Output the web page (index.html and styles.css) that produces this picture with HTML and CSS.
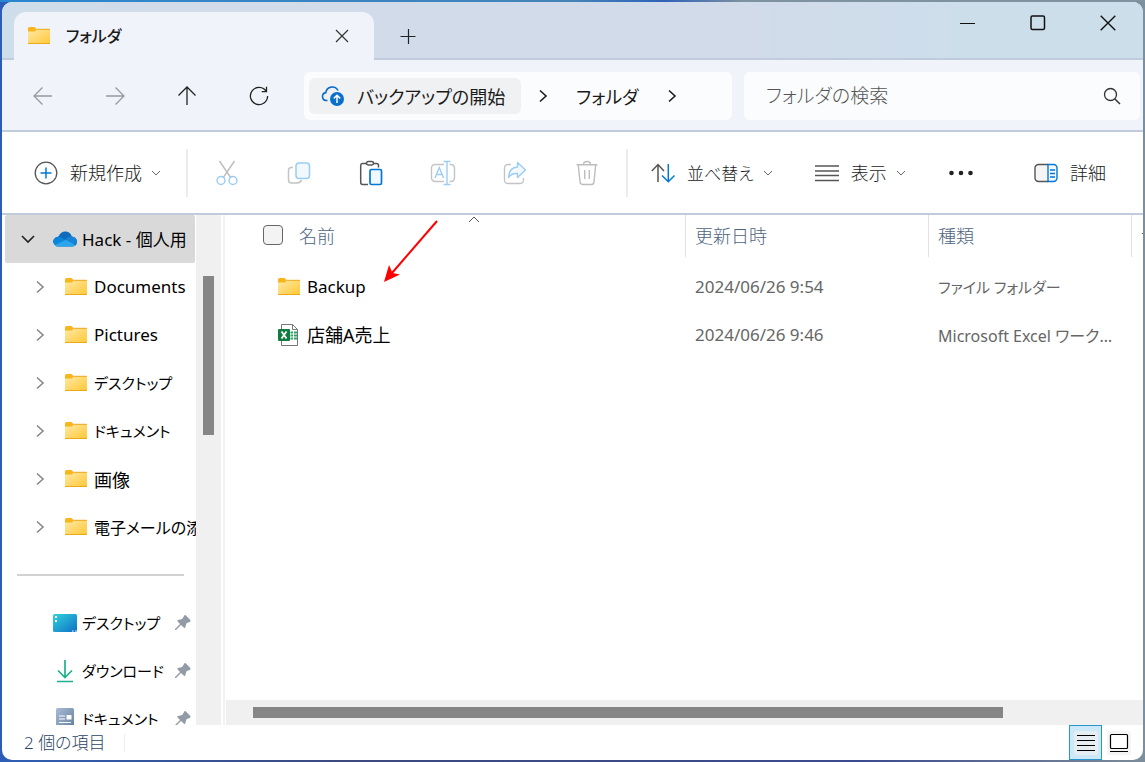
FILE: index.html
```html
<!DOCTYPE html>
<html lang="ja">
<head>
<meta charset="utf-8">
<title>フォルダ</title>
<link rel="stylesheet" href="styles.css">
</head>
<body>
<svg class="sprite" aria-hidden="true">
  <defs>
    <linearGradient id="g-folder" x1="0" y1="0" x2="1" y2="1"><stop offset="0" stop-color="#ffe9a8"/><stop offset="1" stop-color="#ffc937"/></linearGradient>
    <linearGradient id="g-desk" x1="0" y1="0" x2="1" y2="1"><stop offset="0" stop-color="#2fd3dd"/><stop offset="1" stop-color="#1070c4"/></linearGradient>
    <linearGradient id="g-doc" x1="0" y1="0" x2="1" y2="1"><stop offset="0" stop-color="#a9bcd3"/><stop offset="1" stop-color="#5f7d9f"/></linearGradient>
  </defs>
  <symbol id="folder" viewBox="0 0 24 20">
    <path d="M1 2.5Q1 1 2.5 1H7.5L9.5 3V6H1Z" fill="#f9b51c"/>
    <path d="M1 5.5H8L10.5 3H22.5Q23 3 23 3.5V17.5H1Z" fill="url(#g-folder)"/>
    <path d="M9.5 3.3H23M1 17.5H23" stroke="#eda91d" fill="none"/>
  </symbol>
  <symbol id="down" viewBox="0 0 10 10"><path d="M1 3L5 7L9 3" fill="none" stroke="#666"/></symbol>
  <symbol id="right" viewBox="0 0 10 14"><path d="M2 1.5L8 7L2 12.5" fill="none" stroke="currentColor" stroke-width="1.6"/></symbol>
  <symbol id="pin" viewBox="0 0 18 18">
    <path d="M10.5 1.3Q11.3 .8 12 1.5L16.3 6Q17 7 16 7.8L12.5 9.3L11.2 13.4Q10.7 14.5 9.7 13.6L7 11L2 16H1V15L6 10L3.6 7.5Q2.800 6.500 4 6L8.200 5Z" fill="#929ca6"/>
  </symbol>
</svg>

<div class="window">
  <header class="titlebar">
    <div class="tab">
      <svg class="icon24" viewBox="0 0 24 20"><use href="#folder"/></svg>
      <span class="tab-title">フォルダ</span>
      <button class="tab-close" aria-label="タブを閉じる"><svg width="14" height="14" viewBox="0 0 14 14"><path d="M1 1L13 13M13 1L1 13" fill="none" stroke="#333" stroke-width="1.200"/></svg></button>
    </div>
    <button class="tab-new" aria-label="新しいタブ"><svg width="16" height="16" viewBox="0 0 16 16"><path d="M.5 8.500H15.500M8.500 1V16" fill="none" stroke="#222" stroke-width="1.200"/></svg></button>
    <div class="caption">
      <button aria-label="最小化"><svg width="16" height="16" viewBox="0 0 16 16"><path d="M0 8.500H15" stroke="#111"/></svg></button>
      <button aria-label="最大化"><svg width="16" height="16" viewBox="0 0 16 16"><rect x="1" y="1" width="13.500" height="13.500" rx="1.500" fill="none" stroke="#111" stroke-width="1.500"/></svg></button>
      <button aria-label="閉じる"><svg width="16" height="16" viewBox="0 0 16 16"><path d="M.7 .7L15.300 15.300M15.300 .7L.7 15.300" fill="none" stroke="#111" stroke-width="1.400"/></svg></button>
    </div>
  </header>

  <nav class="navbar">
    <div class="nav-buttons">
      <button class="off" aria-label="戻る"><svg width="20" height="20" viewBox="0 0 20 20"><path d="M19 10H1.500M9.500 1.500L1 10L9.500 18.500"/></svg></button>
      <button class="off" aria-label="進む"><svg width="20" height="20" viewBox="0 0 20 20"><path d="M1 10H18.500M10.500 1.500L19 10L10.500 18.500"/></svg></button>
      <button aria-label="上へ"><svg width="20" height="20" viewBox="0 0 20 20"><path d="M10 19V1.500M1.500 9.500L10 1L18.500 9.500"/></svg></button>
      <button aria-label="更新"><svg width="20" height="20" viewBox="0 0 20 20"><path d="M17.300 5.500A8.600 8.600 0 1 0 18.600 10M17.500 .8V5.600H12.700"/></svg></button>
    </div>
    <div class="address">
      <button class="crumb crumb-backup">
        <svg width="24" height="22" viewBox="0 0 24 22"><path d="M6.500 15.500H5A4 4 0 0 1 4.800 7.600A6.500 6.500 0 0 1 17 5.500" fill="none" stroke="#0a6ecb" stroke-width="1.600"/><circle cx="16" cy="14" r="7" fill="#0a6ecb"/><path d="M16 18V10.500M12.800 13.400L16 10.200L19.200 13.400" fill="none" stroke="#fff" stroke-width="1.500"/></svg>
        バックアップの開始
      </button>
      <button class="crumb-next" aria-label="展開"><svg width="10" height="14"><use href="#right"/></svg></button>
      <button class="crumb">フォルダ</button>
      <button class="crumb-next" aria-label="展開"><svg width="10" height="14"><use href="#right"/></svg></button>
    </div>
    <label class="search">
      <input type="text" placeholder="フォルダの検索" aria-label="フォルダの検索">
      <svg width="18" height="18" viewBox="0 0 18 18"><circle cx="7.500" cy="7.500" r="6" fill="none" stroke="#333" stroke-width="1.300"/><path d="M12 12L17 17" stroke="#333" stroke-width="1.500"/></svg>
    </label>
  </nav>

  <div class="toolbar">
    <button class="tool tool-new">
      <svg width="24" height="24" viewBox="0 0 24 24" fill="none"><circle cx="12" cy="12" r="10.800" stroke="#555" stroke-width="1.300"/><path d="M6.500 12H17.500M12 6.500V17.500" stroke="#0078d4" stroke-width="1.500"/></svg>
      <span>新規作成</span><svg class="chev" width="10" height="10"><use href="#down"/></svg>
    </button>
    <div class="tool-icons">
      <button aria-label="切り取り" disabled><svg width="24" height="26" viewBox="0 0 24 26" fill="none" stroke-width="1.400"><path d="M4.500 1L16 18M19.500 1L8 18" stroke="#bdbdbd"/><circle cx="6" cy="20.500" r="4" stroke="#9bcdf2"/><circle cx="18" cy="20.500" r="4" stroke="#9bcdf2"/></svg></button>
      <button aria-label="コピー" disabled><svg width="24" height="26" viewBox="0 0 24 26" fill="none" stroke-width="1.500"><path d="M6 7.500H4.500A3 3 0 0 0 1.500 10.500V20A3 3 0 0 0 4.500 23H10Q13.500 23 14.500 20" stroke="#c4c4c4"/><rect x="9" y="3" width="13.500" height="15.500" rx="3" fill="#f1f8fe" stroke="#9bcdf2"/></svg></button>
      <button aria-label="貼り付け"><svg width="24" height="26" viewBox="0 0 24 26" fill="none" stroke-width="1.500"><path d="M8 3.500H3.500A2 2 0 0 0 1.700 5.500V22.500A2 2 0 0 0 3.700 24.500H9M14 3.500H17.500A2 2 0 0 1 19.500 5.500V7.500" stroke="#555"/><rect x="7.500" y="1.500" width="7" height="3.500" rx="1.700" stroke="#555"/><rect x="11" y="9.500" width="11.500" height="15" rx="1.500" fill="#f1f8fe" stroke="#0078d4" stroke-width="1.700"/></svg></button>
      <button aria-label="名前の変更" disabled><svg width="26" height="26" viewBox="0 0 26 26" fill="none" stroke-width="1.400"><path d="M14 4.500H5A3.500 3.500 0 0 0 1.500 8V18A3.500 3.500 0 0 0 5 21.500H14M19.500 4.500H21A3.500 3.500 0 0 1 24.500 8V18A3.500 3.500 0 0 1 21 21.500H19.500" stroke="#c4c4c4"/><path d="M5 18L9.300 7.500L13.600 18M6.500 14.500H12M13.500 1.500H20.500M13.500 24.500H20.500M17 1.500V24.500" stroke="#9bcdf2"/></svg></button>
      <button aria-label="共有" disabled><svg width="24" height="26" viewBox="0 0 24 26" fill="none" stroke-width="1.400"><path d="M8 4.500H5A3.500 3.500 0 0 0 1.500 8V20A3.500 3.500 0 0 0 5 23.500H17A3.500 3.500 0 0 0 20.500 20V18" stroke="#c4c4c4"/><path d="M14.500 2.500L22.500 10L14.500 17.500V13.500Q8.500 13 5.500 17.500Q6 7.500 14.500 7Z" fill="#f1f8fe" stroke="#9bcdf2" stroke-linejoin="round"/></svg></button>
      <button aria-label="削除" disabled><svg width="24" height="26" viewBox="0 0 24 26" fill="none" stroke="#bdbdbd" stroke-width="1.400"><path d="M1.500 4.700H22.500M8.500 4.500Q8.500 1.500 12 1.500T15.500 4.500M3.300 5L5 21.800Q5.300 24.500 7.500 24.500H16.500Q18.700 24.500 19 21.800L20.700 5M9.700 10V19M14.300 10V19"/></svg></button>
    </div>
    <button class="tool tool-sort">
      <svg width="24" height="20" viewBox="0 0 24 20" fill="none" stroke-width="1.500"><path d="M7 19V2M.8 8L7 1.500L13 8" stroke="#555"/><path d="M17.300 1V18.500M11 12.500L17.300 18.700L23.500 12.500" stroke="#0078d4"/></svg>
      <span>並べ替え</span><svg class="chev" width="10" height="10"><use href="#down"/></svg>
    </button>
    <button class="tool tool-view">
      <svg width="24" height="18" viewBox="0 0 24 18"><path d="M0 2H24M0 7H24M0 11.500H24M0 16.500H24" stroke="#555" stroke-width="1.300"/></svg>
      <span>表示</span><svg class="chev" width="10" height="10"><use href="#down"/></svg>
    </button>
    <button class="tool tool-more" aria-label="その他"><svg width="24" height="6" viewBox="0 0 24 6" fill="#222"><circle cx="2.500" cy="3" r="2.300"/><circle cx="12" cy="3" r="2.300"/><circle cx="21.500" cy="3" r="2.300"/></svg></button>
    <button class="tool tool-details">
      <svg width="24" height="20" viewBox="0 0 24 20" fill="none" stroke-width="1.400"><path d="M14 1.500H4.500A3.500 3.500 0 0 0 1 5V15A3.500 3.500 0 0 0 4.500 18.500H14" fill="#f5f5f5" stroke="#555"/><path d="M14 1.500H19.500A3.500 3.500 0 0 1 23 5V15A3.500 3.500 0 0 1 19.500 18.500H14Z" fill="#f1f8fe" stroke="#0078d4"/><path d="M16 7H21M16 10.500H21M16 14H21" stroke="#0078d4"/></svg>
      <span>詳細</span>
    </button>
  </div>

  <div class="body">
    <aside class="sidebar">
      <ul class="tree">
        <li class="root"><svg class="tw" width="14" height="14" viewBox="0 0 14 14"><path d="M1 4L7 10L13 4" fill="none" stroke="#222" stroke-width="1.600"/></svg>
          <svg width="24" height="16" viewBox="0 0 24 16"><path d="M2 14Q-1 11 1 8Q2.500 5.500 5.500 5.500Q8 0 13 .5Q17.500 1 18.800 5.500Q23.500 6 24 10.500Q24 15 19.500 15.500H5Q3 15.500 2 14Z" fill="#0f6cbd"/><path d="M1 8.500Q3 5 6.500 5.800L14 10L2 14Q-1 11 1 8.500Z" fill="#0a86dc"/><path d="M12 9Q14.500 5.500 18.800 5.600Q24 6.500 24 11L21 14Z" fill="#1683d8"/><path d="M2 14L12.500 9Q14 9 15 10L22.500 14.200Q21.500 15.500 19.500 15.500H5Q3 15.500 2 14Z" fill="#2ca5ec"/></svg>
          <a href="#">Hack - 個人用</a></li>
        <li><svg class="tw" width="10" height="14"><use href="#right"/></svg><svg class="icon24" viewBox="0 0 24 20"><use href="#folder"/></svg><a href="#">Documents</a></li>
        <li><svg class="tw" width="10" height="14"><use href="#right"/></svg><svg class="icon24" viewBox="0 0 24 20"><use href="#folder"/></svg><a href="#">Pictures</a></li>
        <li><svg class="tw" width="10" height="14"><use href="#right"/></svg><svg class="icon24" viewBox="0 0 24 20"><use href="#folder"/></svg><a class="kana" href="#">デスクトップ</a></li>
        <li><svg class="tw" width="10" height="14"><use href="#right"/></svg><svg class="icon24" viewBox="0 0 24 20"><use href="#folder"/></svg><a class="kana" href="#">ドキュメント</a></li>
        <li><svg class="tw" width="10" height="14"><use href="#right"/></svg><svg class="icon24" viewBox="0 0 24 20"><use href="#folder"/></svg><a class="kanji" href="#">画像</a></li>
        <li><svg class="tw" width="10" height="14"><use href="#right"/></svg><svg class="icon24" viewBox="0 0 24 20"><use href="#folder"/></svg><a class="mixed" href="#">電子メールの添付</a></li>
      </ul>
      <hr>
      <ul class="quick">
        <li><svg width="24" height="18" viewBox="0 0 24 18"><rect width="24" height="18" rx="1.500" fill="url(#g-desk)"/><path d="M2 3H4M2 7H4" stroke="#fff" stroke-width="2"/><path d="M19 17H20.500M22 17H23.500" stroke="#fff"/></svg><a class="kana" href="#">デスクトップ</a><svg class="pin" width="18" height="18"><use href="#pin"/></svg></li>
        <li><svg width="24" height="24" viewBox="0 0 24 24" fill="none" stroke="#1fb08c" stroke-width="1.700"><path d="M12 1V18M5 11.500L12 18.500L19 11.500M4 22.500H20"/></svg><a class="kana" href="#">ダウンロード</a><svg class="pin" width="18" height="18"><use href="#pin"/></svg></li>
        <li><svg width="24" height="22" viewBox="0 0 24 22"><rect x="3" y="0" width="18" height="22" rx="1.500" fill="url(#g-doc)"/><path d="M6 8H12M6 11H12M6 14.500H18M6 18H18" stroke="#fff" stroke-width="1.200"/><rect x="13.500" y="7" width="5" height="4.500" fill="#fff"/></svg><a class="kana" href="#">ドキュメント</a><svg class="pin" width="18" height="18"><use href="#pin"/></svg></li>
      </ul>
    </aside>
    <div class="vscroll"><div class="vthumb"></div></div>
    <main class="content">
      <div class="files">
        <table>
          <colgroup><col><col class="c-date"><col class="c-type"><col class="c-size"></colgroup>
          <thead>
            <tr>
              <th class="first"><div class="cell head"><input type="checkbox" id="all"><label for="all">名前</label></div><svg class="sorted" width="12" height="7" viewBox="0 0 12 7"><path d="M1 6L6 1L11 6" fill="none" stroke="#555"/></svg></th>
              <th><div class="cell head">更新日時</div></th>
              <th><div class="cell head">種類</div></th>
              <th><div class="cell head">サイズ</div></th>
            </tr>
          </thead>
          <tbody>
            <tr>
              <td class="first"><div class="cell name"><svg class="icon24" viewBox="0 0 24 20"><use href="#folder"/></svg><span>Backup</span></div></td>
              <td><div class="cell">2024/06/26 9:54</div></td><td><div class="cell kana">ファイル フォルダー</div></td><td></td>
            </tr>
            <tr>
              <td class="first"><div class="cell name"><svg width="24" height="24" viewBox="0 0 24 24"><path d="M4.500 1.500H15.500L20.500 6.500V22.500H4.500Z" fill="#fff" stroke="#777"/><path d="M15.500 1.500V6.500H20.500" fill="none" stroke="#777"/><path d="M13.500 9.500H20M13.500 12.500H20M13.500 15.500H20" stroke="#2aa568" stroke-width="2"/><path d="M16.500 8V17" stroke="#fff"/><rect x="1" y="6" width="12" height="12" rx="1" fill="#107c41"/><path d="M4.500 8.500L9.500 15.500M9.500 8.500L4.500 15.500" stroke="#fff" stroke-width="1.800"/></svg><span class="kanji">店舗A売上</span></div></td>
              <td><div class="cell">2024/06/26 9:46</div></td><td><div class="cell mixed">Microsoft Excel ワークシート</div></td><td></td>
            </tr>
          </tbody>
        </table>
        <svg class="arrow" width="58" height="66" viewBox="0 0 58 66"><path d="M55 2L10 54" stroke="#f00" stroke-width="2"/><path d="M2 63L7 46L10.500 54L18 55.500Z" fill="#f00"/></svg>
      </div>
      <div class="hscroll"><div class="hthumb"></div></div>
    </main>
  </div>

  <footer class="status">
    <span class="count">2 個の項目</span>
    <button class="view on" aria-label="詳細表示"><svg width="24" height="24" viewBox="0 0 24 24"><rect width="24" height="24" rx="3" fill="#e5eef2"/><path d="M3 4.500H21M3 9.500H21M3 14.500H21M3 19.500H21" stroke="#000" stroke-width="1.100"/></svg></button>
    <button class="view" aria-label="大アイコン"><svg width="24" height="24" viewBox="0 0 24 24"><rect width="24" height="24" rx="3" fill="#f5f5f5"/><rect x="3.500" y="3.500" width="17" height="14" rx="1" fill="#fff" stroke="#000" stroke-width="1.200"/><path d="M3 20.500H21" stroke="#000"/></svg></button>
  </footer>
</div>
</body>
</html>
```
FILE: styles.css
```css
* { box-sizing: border-box; }

body {
  margin: 0;
  height: 100vh;
  padding: 2px;
  background:
    linear-gradient(90deg, #2f5fb5, #3c4a80 30%, #3b4b8f 75%, #7d8c99) bottom / 100% 2px no-repeat,
    linear-gradient(90deg, #2a86d0, #4583b8 50%, #2f62b8 58%, #7f929f 65%) top / 100% 2px no-repeat,
    linear-gradient(90deg, #2a5cb8 50%, #7a909f 50%);
  font-family: "Noto Sans", "Noto Sans CJK JP", sans-serif;
  font-size: 17px;
  font-feature-settings: "palt";
  color: #1b1b1b;
  overflow: hidden;
}

.sprite { position: absolute; width: 0; height: 0; }
svg { flex: none; display: block; }
.icon24 { width: 24px; height: 20px; }
.kana { font-size: 15px; }
.mixed { font-size: 16px; }
.kanji { font-size: 18px; }

button {
  border: 0;
  padding: 0;
  background: none;
  font: inherit;
  font-feature-settings: inherit;
  color: inherit;
  display: flex;
  align-items: center;
  justify-content: center;
  white-space: nowrap;
}
a { color: inherit; text-decoration: none; }
ul { list-style: none; margin: 0; padding: 0; }

.window {
  height: 100%;
  display: flex;
  flex-direction: column;
  background: #fff;
  border-radius: 10px;
  overflow: hidden;
}

.titlebar {
  display: flex;
  flex: none;
  height: 58px;
  padding: 10px 0 0 12px;
  background: linear-gradient(90deg, #cddeea, #d1dbea 12%, #d1dbea 65%, #cddeeb 85%);
  box-shadow: inset 0 -2px #c1cbde;
}
.tab {
  display: flex;
  align-items: center;
  width: 360px;
  padding: 0 24px 0 13px;
  background: #f0f3f9;
  border-radius: 12px 12px 0 0;
}
.tab-title { margin-left: 15px; padding-bottom: 2px; font-size: 16px; font-weight: 500; }
.tab-close { margin-left: auto; width: 16px; height: 24px; }
.tab-new { width: 68px; height: 48px; }
.caption { display: flex; margin: -10px 0 0 auto; }
.caption button { width: 70px; height: 41px; }

.navbar {
  display: flex;
  flex: none;
  align-items: center;
  height: 72px;
  padding: 2px 3px 0 5px;
  background: #f0f3f9;
  border-bottom: 2px solid #c0ccda;
}
.nav-buttons { display: flex; }
.nav-buttons button { width: 72px; height: 48px; }
.nav-buttons svg { fill: none; stroke: #222; stroke-width: 1.3; }
.nav-buttons .off svg { stroke: #999; }
.address, .search {
  display: flex;
  align-items: center;
  height: 48px;
  border-radius: 6px;
  background: #fbfcfe;
  font-size: 19px;
}
.address { flex: 1 1 428px; margin-left: 9px; padding: 0 5px; }
.search { flex: 1 1 396px; margin-left: 12px; padding: 0 19px 0 22px; }
.crumb { height: 36px; padding-bottom: 1px; font-size: 18px; }
.crumb-backup {
  gap: 12px;
  padding: 0 16px 1px 12px;
  background: #f0f1f3;
  border-radius: 6px;
}
.crumb-next {
  width: 55px;
  height: 36px;
  justify-content: flex-end;
  padding-right: 28px;
}
.crumb-next:last-child { width: 66px; }
.search input {
  flex: 1;
  min-width: 0;
  border: 0;
  padding: 0;
  outline: 0;
  background: none;
  font: inherit;
  font-feature-settings: inherit;
  font-weight: 300;
}
.search input::placeholder { color: #555; opacity: 1; }

.toolbar {
  display: flex;
  flex: none;
  align-items: center;
  height: 83px;
  padding: 0 37px 0 32px;
  border-bottom: 2px solid #c0ccda;
  font-size: 18px;
}
.tool { height: 48px; gap: 12px; font-weight: 300; }
.tool span { padding-bottom: 1px; }
.tool .chev { margin-left: -3px; }
.tool-new { margin-right: 25px; }
.tool-icons {
  display: flex;
  padding: 0 3px;
  border: solid #ececec;
  border-width: 0 2px;
}
.tool-icons button { width: 72px; height: 48px; }
.tool-sort { margin-left: 23px; font-size: 17px; }
.tool-view { margin-left: 42px; }
.tool-more { margin-left: 43px; }
.tool-details { margin-left: auto; }

.body { display: flex; flex: 1; min-height: 0; }

.sidebar {
  flex: none;
  width: 194px;
  padding-left: 3px;
  overflow: hidden;
  color: #000;
}
.sidebar li {
  display: flex;
  align-items: center;
  height: 48px;
  gap: 5px;
  padding-left: 48px;
  white-space: nowrap;
}
.sidebar a { padding-bottom: 1px; }
.name .kanji { padding-bottom: 2px; }
.sidebar .tree li { padding-left: 30px; gap: 0; }
.sidebar .tw { color: #888; margin-right: 19px; }
.sidebar .icon24 { margin-right: 6px; }
.sidebar .tree .root {
  padding-left: 16px;
  margin-right: 1px;
  gap: 5px;
  background: #d9d9d9;
  border-radius: 2px;
}
.sidebar .root .tw { margin-right: 13px; }
.sidebar hr {
  height: 2px;
  margin: 23px 12px 23px 12px;
  border: 0;
  background: #d2d2d2;
}
.sidebar .pin { margin: 0 4px 0 auto; }

.vscroll {
  flex: none;
  width: 25px;
  padding: 61px 7px 0;
  background: #f0f0f0;
}
.vthumb { height: 159px; background: #868686; }

.content {
  flex: 1;
  min-width: 0;
  display: flex;
  flex-direction: column;
  margin-left: 2px;
  border-left: 2px solid #f2f2f2;
}
.files { position: relative; flex: 1; padding-left: 38px; overflow: hidden; }
table { width: 100%; table-layout: fixed; border-collapse: collapse; }
.c-date { width: 243px; }
.c-type { width: 203px; }
.c-size { width: 12px; }
th, td { padding: 0; height: 48px; font-weight: 400; text-align: left; }
th { position: relative; vertical-align: top; }
.cell {
  padding-left: 10px;
  overflow: hidden;
  white-space: nowrap;
  text-overflow: ellipsis;
  color: #666;
}
td .cell { padding-right: 16px; padding-bottom: 1px; }
td:nth-child(3) .cell { padding-right: 10px; }
.head {
  display: flex;
  align-items: center;
  height: 42px;
  padding-bottom: 2px;
  padding-left: 9px;
  color: #4e6580;
  font-size: 18px;
  font-weight: 300;
  border-left: 1px solid #e2e2e2;
}
.first .head { padding: 0 0 2px; border: 0; }
.head input {
  appearance: none;
  width: 20px;
  height: 20px;
  margin: 0 16px 0 0;
  border: 1px solid #666;
  border-radius: 4px;
  background: #f3f3f3;
}
.sorted { position: absolute; top: 1px; left: 50%; margin-left: -6px; }
.name {
  display: flex;
  align-items: center;
  gap: 6px;
  padding-left: 14px;
  color: #000;
}
.arrow { position: absolute; left: 157px; top: 4px; }

.hscroll {
  flex: none;
  height: 25px;
  margin-left: 1px;
  padding: 7px 140px 7px 27px;
  background: #f0f0f0;
}
.hthumb { height: 11px; background: #868686; }

.status {
  display: flex;
  flex: none;
  align-items: center;
  height: 35px;
  padding: 0 8px 0 22px;
  color: #2b4562;
  font-weight: 300;
}
.count { margin-right: auto; padding-right: 18px; font-size: 17px; line-height: 18px; border-right: 1px solid #eee; }
.view { width: 33px; height: 35px; }
.view.on { background: #cde8f6; border: 1px solid #2796cc; }
```
